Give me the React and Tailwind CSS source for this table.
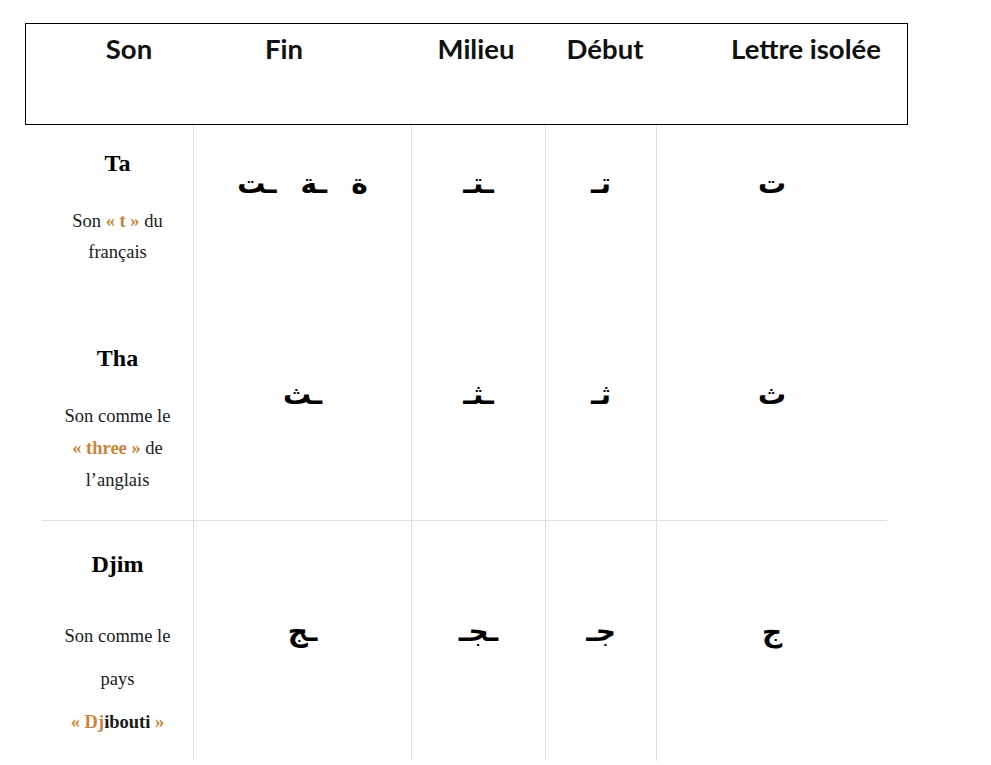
export default function App() {
  const ar = { fontFamily: '"DejaVu Sans", sans-serif' };
  const Cell = ({ children, pt, border = true }) => (
    <div className={`flex justify-center ${border ? "border-l border-[#dedede]" : ""}`} style={{ paddingTop: pt }}>
      {children}
    </div>
  );
  const Glyph = ({ c }) => (
    <span className="text-[28px] font-bold leading-none text-black" style={ar} dir="rtl">{c}</span>
  );
  const O = ({ children }) => <span className="font-bold text-[#c9843c]">{children}</span>;
  return (
    <div className="w-[991px] h-[765px] bg-white overflow-hidden relative">
      <div className="pt-[23px] pl-[25px]">
        <div className="w-[883px] h-[102px] border border-black grid grid-cols-[206px_104px_85px_110px_148px_27px_200px] pt-[9px] text-[27.5px] font-bold text-[#111]" style={{ fontFamily: 'Lato, "Open Sans", sans-serif' }}>
          <div className="text-center leading-[32px]">Son</div>
          <div className="text-center leading-[32px]">Fin</div>
          <div></div>
          <div className="text-center leading-[32px]">Milieu</div>
          <div className="text-center leading-[32px]">Début</div>
          <div></div>
          <div className="text-center leading-[32px]">Lettre isolée</div>
        </div>
      </div>
      <div className="ml-[42px] w-[845px] grid grid-cols-[151px_218px_134px_111px_231px] text-[#1a1a1a]" style={{ fontFamily: '"Liberation Serif", serif' }}>
        {/* Row 1 */}
        <div className="h-[195px] flex flex-col items-center pt-[24px]">
          <div className="text-[24px] font-bold leading-[28px] text-black">Ta</div>
          <div className="mt-[29px] text-[18.5px] leading-[31px] text-center">
            Son <O>« t »</O> du<br />français
          </div>
        </div>
        <Cell pt={45}>
          <div className="flex gap-[24px]">
            <Glyph c="ـت" />
            <Glyph c="ـة" />
            <Glyph c="ة" />
          </div>
        </Cell>
        <Cell pt={45}><Glyph c="ـتـ" /></Cell>
        <Cell pt={45}><Glyph c="تـ" /></Cell>
        <Cell pt={45}><Glyph c="ت" /></Cell>
        {/* Row 2 */}
        <div className="h-[200px] flex flex-col items-center pt-[24px]">
          <div className="text-[24px] font-bold leading-[28px] text-black">Tha</div>
          <div className="mt-[28px] text-[18.5px] leading-[32px] text-center">
            Son comme le<br /><O>« three »</O> de<br />l’anglais
          </div>
        </div>
        <Cell pt={61}><Glyph c="ـث" /></Cell>
        <Cell pt={61}><Glyph c="ـثـ" /></Cell>
        <Cell pt={61}><Glyph c="ثـ" /></Cell>
        <Cell pt={61}><Glyph c="ث" /></Cell>
        {/* Row 3 */}
        <div className="col-span-5 h-px bg-[#e2e2e2] relative z-10"></div>
        <div className="h-[240px] flex flex-col items-center pt-[29px]">
          <div className="text-[24px] font-bold leading-[28px] text-black">Djim</div>
          <div className="mt-[37px] text-[18.5px] leading-[43px] text-center">
            Son comme le<br />pays<br />
            <span className="font-bold"><span className="text-[#c9843c]">« Dj</span>ibouti<span className="text-[#c9843c]"> »</span></span>
          </div>
        </div>
        <Cell pt={97}><Glyph c="ـج" /></Cell>
        <Cell pt={97}><Glyph c="ـجـ" /></Cell>
        <Cell pt={97}><Glyph c="جـ" /></Cell>
        <Cell pt={97}><Glyph c="ج" /></Cell>
      </div>
    </div>
  );
}
